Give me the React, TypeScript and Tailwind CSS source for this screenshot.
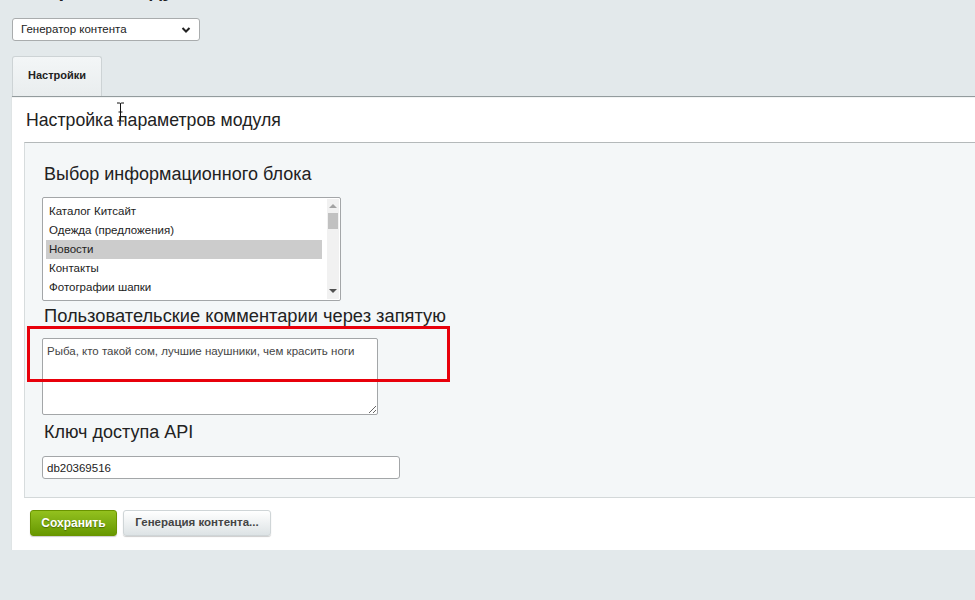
import React from "react";

const items = [
  "Каталог Китсайт",
  "Одежда (предложения)",
  "Новости",
  "Контакты",
  "Фотографии шапки",
];

export default function App() {
  return (
    <div className="relative h-[600px] w-[975px] overflow-hidden bg-[#e3e9eb] font-['Liberation_Sans',Arial,sans-serif] text-[#000]">
      <div className="pl-3">
        <h1 className="mt-[-22px] h-[24px] whitespace-nowrap text-[20px] font-bold leading-[24px] text-[#222]">
          Настройки модуля
        </h1>
        <div className="mt-[16px] flex h-[23px] w-[188px] items-center justify-between rounded-[3px] border border-[#a9acad] bg-white pl-[8px] pr-[8px] text-[11.5px] text-[#222]">
          <span>Генератор контента</span>
          <svg width="10" height="8" viewBox="0 0 10 8">
            <path d="M1.5 2 L5 5.5 L8.5 2" fill="none" stroke="#222" strokeWidth="2" />
          </svg>
        </div>
        <div className="mt-[15px] flex h-[40px] w-[90px] items-center justify-center rounded-t-[3px] border border-b-0 border-[#cdd3d5] bg-gradient-to-b from-[#f3f6f7] to-[#e9edee] pb-[3px] text-[11px] font-bold text-[#222]">
          Настройки
        </div>
        <div className="border-t border-[#939b9d] bg-white shadow-[-1px_0_0_#dfe4e5]">
          <div className="border-t border-[#f2f4f4] pl-3 pt-[11px]">
            <div className="h-[33px] pl-[2px] text-[17.7px] leading-[22px] text-[#222]">
              Настройка параметров модуля
            </div>
            <div className="border-t border-[#b4b9ba] border-l border-l-[#d7dcdd] border-b border-b-[#d3d8d9] bg-[#f4f7f8] pl-[17px] pb-[18px] pt-[20px]">
              <div className="pl-[2px] text-[18px] leading-[22px] text-[#222]">
                Выбор информационного блока
              </div>
              <div className="mt-[12px] flex h-[104px] w-[299px] rounded-[2px] border border-[#a3a6a8] bg-white">
                <div className="flex-1 pl-[3px] pr-[5px] pt-[4px]">
                  {items.map((it) => (
                    <div
                      key={it}
                      className={
                        "h-[19px] pl-[3px] text-[11.5px] leading-[19px] text-[#222] " +
                        (it === "Новости" ? "bg-[#cccccc]" : "")
                      }
                    >
                      {it}
                    </div>
                  ))}
                </div>
                <div className="relative my-[1px] mr-[1px] w-[12px] bg-[#f1f1f1]">
                  <svg className="absolute left-[2px] top-[4px]" width="8" height="5" viewBox="0 0 8 5">
                    <path d="M0 5 L4 1 L8 5 Z" fill="#a3a3a3" />
                  </svg>
                  <div className="absolute left-[1px] top-[14px] h-[16px] w-[10px] bg-[#c1c1c1]" />
                  <svg className="absolute bottom-[5px] left-[2px]" width="8" height="5" viewBox="0 0 8 5">
                    <path d="M0 0 L4 4 L8 0 Z" fill="#505050" />
                  </svg>
                </div>
              </div>
              <div className="mt-[4px] pl-[2px] text-[18.3px] leading-[22px] text-[#222]">
                Пользовательские комментарии через запятую
              </div>
              <textarea
                readOnly
                className="mt-[11px] block h-[77px] w-[336px] resize rounded-[2px] border border-[#a3a6a8] bg-white px-[4px] pt-[4px] text-[11.5px] leading-[16px] text-[#444] outline-none"
                value="Рыба, кто такой сом, лучшие наушники, чем красить ноги"
              />
              <div className="mt-[6px] pl-[2px] text-[18px] leading-[22px] text-[#222]">
                Ключ доступа API
              </div>
              <input
                readOnly
                className="mt-[13px] block h-[23px] w-[358px] rounded-[3px] border border-[#a3a6a8] bg-white px-[4px] text-[11.5px] text-[#222] outline-none"
                value="db20369516"
              />
            </div>
            <div className="flex gap-[6px] pb-[14px] pl-[6px] pt-[12px]">
              <button className="h-[26px] w-[87px] rounded-[3px] border border-[#6a9400] bg-gradient-to-b from-[#93c11e] to-[#679800] text-[12px] font-bold text-white [text-shadow:0_1px_1px_rgba(0,0,0,0.35)] shadow-[0_1px_1px_rgba(0,0,0,0.2)]">
                Сохранить
              </button>
              <button className="h-[26px] w-[148px] rounded-[3px] border border-[#cfd5d7] bg-gradient-to-b from-[#ffffff] to-[#dde3e5] text-[11.5px] font-bold text-[#444] shadow-[0_1px_1px_rgba(0,0,0,0.2)]">
                Генерация контента...
              </button>
            </div>
          </div>
        </div>
      </div>
      <div className="pointer-events-none absolute left-[27px] top-[326px] h-[56px] w-[423px] border-[3px] border-[#e8000b]" />
      <svg className="pointer-events-none absolute left-[116px] top-[102px]" width="9" height="20" viewBox="0 0 9 20">
        <path d="M1 1 H3.5 Q4.5 1 4.5 2 V18 Q4.5 19 3.5 19 H1 M8 1 H5.5 Q4.5 1 4.5 2 M4.5 18 Q4.5 19 5.5 19 H8 M2.5 10 H6.5" fill="none" stroke="#111" strokeWidth="1" />
      </svg>
    </div>
  );
}
